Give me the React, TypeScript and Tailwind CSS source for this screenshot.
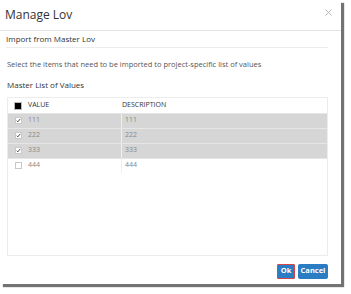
import React from 'react';

interface LovRow {
  value: string;
  description: string;
  checked: boolean;
}

const rows: LovRow[] = [
  { value: '111', description: '111', checked: true },
  { value: '222', description: '222', checked: true },
  { value: '333', description: '333', checked: true },
  { value: '444', description: '444', checked: false },
];

// Small checkbox used in the grid
const Check: React.FC<{ checked: boolean }> = ({ checked }) => (
  <div className="w-[7px] h-[7px] border border-[#c8c8c8] bg-white flex items-center justify-center">
    {checked && (
      <svg width="7" height="7" viewBox="0 0 7 7" className="-mt-[1px]">
        <path d="M1 3.8 L2.6 5.4 L6 1.2" fill="none" stroke="#222" strokeWidth="1.1" />
      </svg>
    )}
  </div>
);

const App: React.FC = () => {
  return (
    <div className="w-[351px] h-[294px] bg-white" style={{ fontFamily: '"Open Sans", sans-serif' }}>
      <div className="w-[341px] h-[284px] bg-white shadow-[3px_3px_1px_rgba(0,0,0,0.55)] flex flex-col">
        {/* Header */}
        <div className="h-[31px] border-b border-[#e3e3e3] flex items-center justify-between pl-[5px] pr-[9px] shrink-0">
          <h1 className="text-[12px] text-[#333] leading-none">Manage Lov</h1>
          <svg width="7" height="7" viewBox="0 0 7 7" className="-mt-[6px]">
            <path d="M0.5 0.5 L6.5 6.5 M6.5 0.5 L0.5 6.5" stroke="#b0b0b0" strokeWidth="0.9" />
          </svg>
        </div>

        {/* Body */}
        <div className="flex-1 flex flex-col pl-[6px] pr-[13px]">
          <div className="h-[17px] border-b border-[#ececec] flex items-center text-[8px] text-[#333]">
            Import from Master Lov
          </div>
          <p className="mt-[13px] pl-[1px] text-[7.5px] text-[#555] leading-none">
            Select the items that need to be imported to project-specific list of values
          </p>
          <p className="mt-[12px] pl-[1px] text-[8px] text-[#333] leading-none">Master List of Values</p>

          {/* Grid */}
          <div className="mt-[8px] ml-[1px] h-[159px] border border-[#ececec] text-[7px]">
            <div className="h-[15px] pt-[1px] flex items-center text-[#333]">
              <div className="w-[20px] flex justify-center">
                <div className="w-[6px] h-[6px] bg-black outline outline-1 outline-[#bbb]" />
              </div>
              <div className="w-[94px]">VALUE</div>
              <div>DESCRIPTION</div>
            </div>
            {rows.map((row) => (
              <div
                key={row.value}
                className={`h-[15px] flex items-center text-[#888] border-t border-[#e6e6e6] ${
                  row.checked ? 'bg-[#d6d6d6]' : 'bg-white'
                }`}
              >
                <div className="w-[20px] flex justify-center">
                  <Check checked={row.checked} />
                </div>
                <div className="w-[94px] h-full flex items-center border-r border-[#f0f0f0]">{row.value}</div>
                <div className="pl-[3px]">{row.description}</div>
              </div>
            ))}
          </div>

          {/* Footer buttons */}
          <div className="mt-[8px] flex justify-end gap-[3px]">
            <button className="h-[15px] w-[18px] bg-[#2a7cc3] border border-[#d6454a] rounded-[1px] text-white text-[7.5px] font-bold leading-none">
              Ok
            </button>
            <button className="h-[15px] w-[30px] bg-[#2a7cc3] rounded-[2px] text-white text-[7.5px] font-bold leading-none">
              Cancel
            </button>
          </div>
        </div>
      </div>
    </div>
  );
};

export default App;
